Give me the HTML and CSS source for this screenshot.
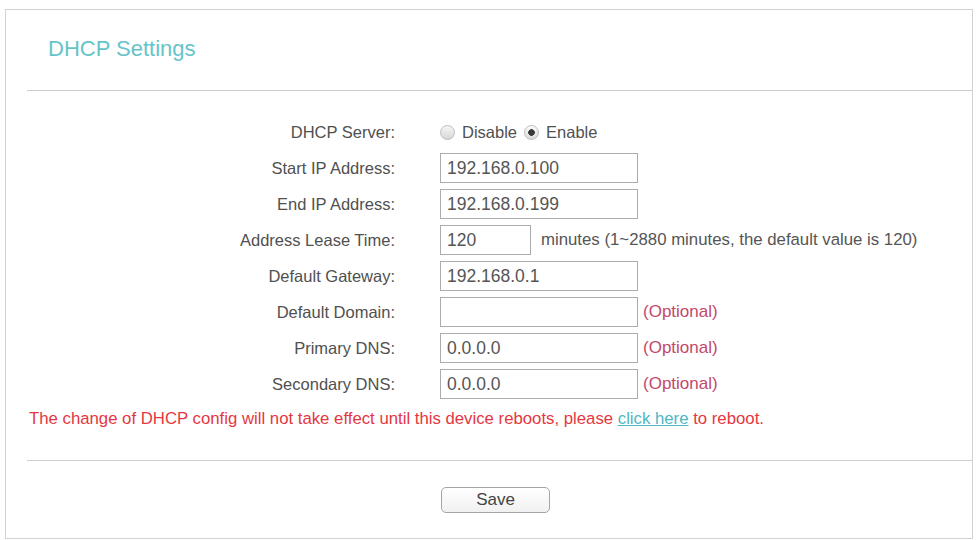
FILE: index.html
```html
<!DOCTYPE html>
<html>
<head>
<meta charset="utf-8">
<title>DHCP Settings</title>
<link rel="stylesheet" href="styles.css">
</head>
<body>
<div class="panel">
  <div class="header"><h1 class="title">DHCP Settings</h1></div>
  <div class="divider"></div>
  <div class="form">
    <div class="label">DHCP Server:</div>
    <div class="field">
      <input type="radio" name="srv" class="radio"><span class="opt">Disable</span>
      <input type="radio" name="srv" class="radio" checked><span class="opt">Enable</span>
    </div>

    <div class="label">Start IP Address:</div>
    <div class="field"><input class="text" type="text" value="192.168.0.100"></div>

    <div class="label">End IP Address:</div>
    <div class="field"><input class="text" type="text" value="192.168.0.199"></div>

    <div class="label">Address Lease Time:</div>
    <div class="field"><input class="text short" type="text" value="120"><span class="hint">minutes (1~2880 minutes, the default value is 120)</span></div>

    <div class="label">Default Gateway:</div>
    <div class="field"><input class="text" type="text" value="192.168.0.1"></div>

    <div class="label">Default Domain:</div>
    <div class="field"><input class="text" type="text" value=""><span class="optional">(Optional)</span></div>

    <div class="label">Primary DNS:</div>
    <div class="field"><input class="text" type="text" value="0.0.0.0"><span class="optional">(Optional)</span></div>

    <div class="label">Secondary DNS:</div>
    <div class="field"><input class="text" type="text" value="0.0.0.0"><span class="optional">(Optional)</span></div>
  </div>
  <p class="notice">The change of DHCP config will not take effect until this device reboots, please <a href="#" class="link">click here</a> to reboot.</p>
  <div class="divider bottom"></div>
  <div class="actions"><button class="save" type="button">Save</button></div>
</div>
</body>
</html>
```

FILE: styles.css
```css
html, body {
  margin: 0;
  padding: 0;
  background: #ffffff;
}

body {
  font-family: "Liberation Sans", Arial, sans-serif;
  color: #505050;
}

.panel {
  margin: 9px 3px 0 5px;
  border: 1px solid #d2d2d2;
  background: #fff;
}

.header {
  height: 80px;
  box-sizing: border-box;
  padding: 27px 0 0 42px;
}

.title {
  margin: 0;
  font-size: 22px;
  line-height: 24px;
  font-weight: normal;
  color: #66c4c9;
}

.divider {
  height: 1px;
  margin-left: 21px;
  background: #cfcfcf;
}

.divider.bottom {
  margin-top: 31px;
}

.form {
  margin-top: 26px;
  display: grid;
  grid-template-columns: 389px auto;
  grid-auto-rows: 30px;
  column-gap: 45px;
  row-gap: 6px;
  align-items: center;
}

.label {
  text-align: right;
  font-size: 16.5px;
  color: #505050;
  white-space: nowrap;
}

.field {
  display: flex;
  align-items: center;
  height: 30px;
  white-space: nowrap;
}

.radio {
  -webkit-appearance: none;
  appearance: none;
  width: 15px;
  height: 15px;
  margin: 0 7px 0 0;
  border-radius: 50%;
  border: 1px solid #bdbdbd;
  box-sizing: border-box;
  background: linear-gradient(#f6f6f6, #d6d6d6);
}

.radio:checked {
  background:
    radial-gradient(circle, #3a3a3a 0, #3a3a3a 3px, rgba(0,0,0,0) 3.6px),
    linear-gradient(#fbfbfb, #dcdcdc);
}

.opt {
  font-size: 16.5px;
  color: #505050;
  margin-right: 7px;
}

.text {
  width: 198px;
  height: 30px;
  box-sizing: border-box;
  margin: 0;
  border: 1px solid #ababab;
  border-radius: 0;
  padding: 0 6px;
  font-family: "Liberation Sans", Arial, sans-serif;
  font-size: 17.5px;
  color: #555;
  background: #fff;
  outline: none;
}

.text.short {
  width: 91px;
}

.hint {
  margin-left: 10px;
  font-size: 16.8px;
  color: #555;
}

.optional {
  margin-left: 5px;
  font-size: 17px;
  color: #c4476b;
}

.notice {
  margin: 10px 0 0 0;
  padding-left: 23px;
  font-size: 16.75px;
  line-height: 20px;
  color: #e5373f;
  white-space: nowrap;
}

.link {
  color: #4fb7c3;
  text-decoration: underline;
}

.actions {
  padding: 26px 0 25px 435px;
  display: flex;
}

.save {
  width: 109px;
  height: 26px;
  box-sizing: border-box;
  margin: 0;
  border: 1px solid #a5a5a5;
  border-radius: 5px;
  background: linear-gradient(#ffffff, #f1f1f1);
  font-family: "Liberation Sans", Arial, sans-serif;
  font-size: 17px;
  color: #444;
  padding: 0;
}
```
